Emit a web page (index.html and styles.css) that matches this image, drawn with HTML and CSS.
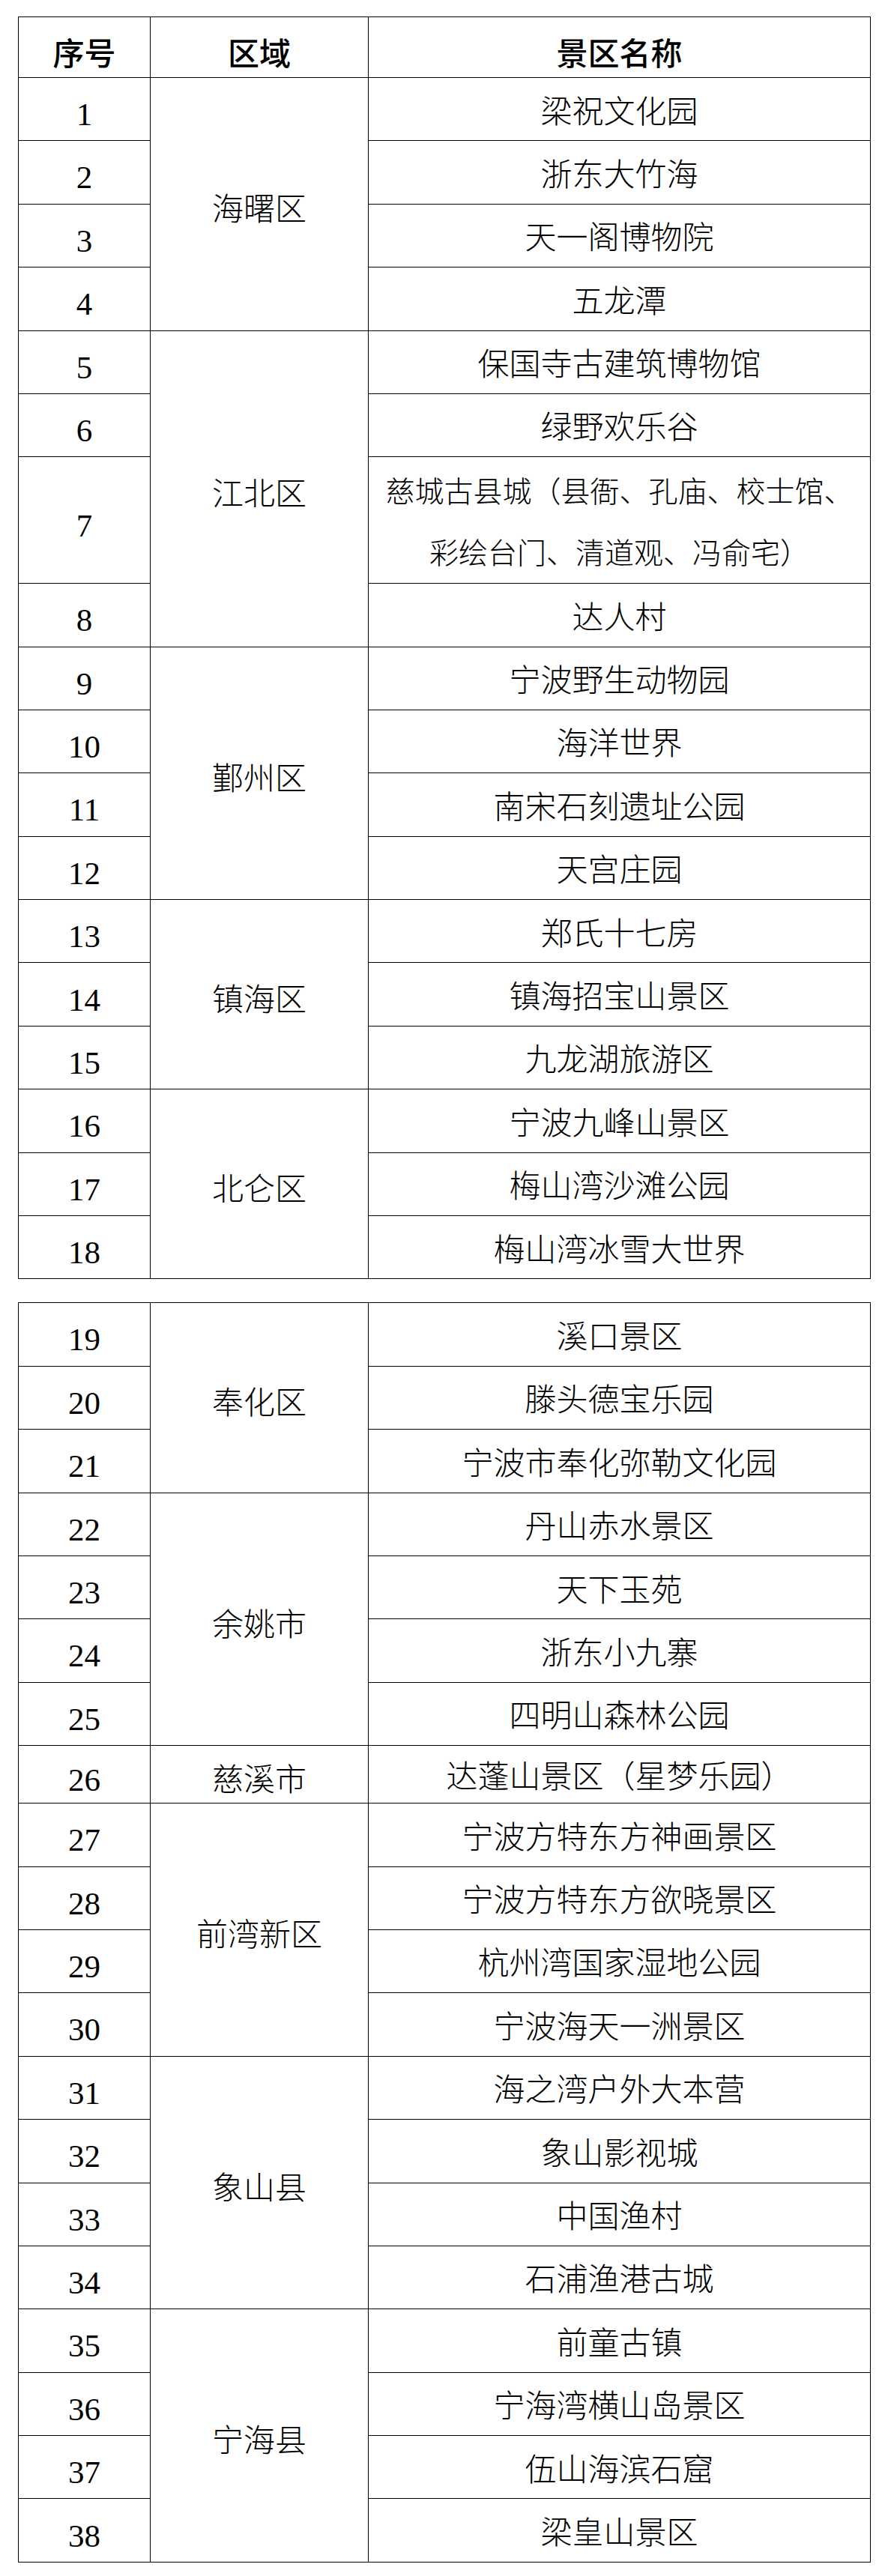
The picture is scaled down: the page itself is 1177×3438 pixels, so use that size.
FILE: index.html
```html
<!DOCTYPE html>
<html lang="zh-CN">
<head>
<meta charset="utf-8">
<title>景区名单</title>
<link rel="stylesheet" href="styles.css">
</head>
<body>
<table class="tbl first">
  <colgroup><col class="c1"><col class="c2"><col class="c3"></colgroup>
  <tr class="head"><th>序号</th><th>区域</th><th>景区名称</th></tr>
  <tr><td class="num">1</td><td class="reg" rowspan="4">海曙区</td><td class="name">梁祝文化园</td></tr>
  <tr><td class="num">2</td><td class="name">浙东大竹海</td></tr>
  <tr><td class="num">3</td><td class="name">天一阁博物院</td></tr>
  <tr><td class="num">4</td><td class="name">五龙潭</td></tr>
  <tr><td class="num">5</td><td class="reg" rowspan="4">江北区</td><td class="name">保国寺古建筑博物馆</td></tr>
  <tr><td class="num">6</td><td class="name">绿野欢乐谷</td></tr>
  <tr class="tall"><td class="num">7</td><td class="name two">慈城古县城（县衙、孔庙、校士馆、<br>彩绘台门、清道观、冯俞宅）</td></tr>
  <tr><td class="num">8</td><td class="name">达人村</td></tr>
  <tr><td class="num">9</td><td class="reg" rowspan="4">鄞州区</td><td class="name">宁波野生动物园</td></tr>
  <tr><td class="num">10</td><td class="name">海洋世界</td></tr>
  <tr><td class="num">11</td><td class="name">南宋石刻遗址公园</td></tr>
  <tr><td class="num">12</td><td class="name">天宫庄园</td></tr>
  <tr><td class="num">13</td><td class="reg" rowspan="3">镇海区</td><td class="name">郑氏十七房</td></tr>
  <tr><td class="num">14</td><td class="name">镇海招宝山景区</td></tr>
  <tr><td class="num">15</td><td class="name">九龙湖旅游区</td></tr>
  <tr><td class="num">16</td><td class="reg" rowspan="3">北仑区</td><td class="name">宁波九峰山景区</td></tr>
  <tr><td class="num">17</td><td class="name">梅山湾沙滩公园</td></tr>
  <tr><td class="num">18</td><td class="name">梅山湾冰雪大世界</td></tr>
</table>

<table class="tbl second">
  <colgroup><col class="c1"><col class="c2"><col class="c3"></colgroup>
  <tr><td class="num">19</td><td class="reg" rowspan="3">奉化区</td><td class="name">溪口景区</td></tr>
  <tr><td class="num">20</td><td class="name">滕头德宝乐园</td></tr>
  <tr><td class="num">21</td><td class="name">宁波市奉化弥勒文化园</td></tr>
  <tr><td class="num">22</td><td class="reg" rowspan="4">余姚市</td><td class="name">丹山赤水景区</td></tr>
  <tr><td class="num">23</td><td class="name">天下玉苑</td></tr>
  <tr><td class="num">24</td><td class="name">浙东小九寨</td></tr>
  <tr><td class="num">25</td><td class="name">四明山森林公园</td></tr>
  <tr class="short"><td class="num">26</td><td class="reg">慈溪市</td><td class="name">达蓬山景区（星梦乐园）</td></tr>
  <tr><td class="num">27</td><td class="reg" rowspan="4">前湾新区</td><td class="name">宁波方特东方神画景区</td></tr>
  <tr><td class="num">28</td><td class="name">宁波方特东方欲晓景区</td></tr>
  <tr><td class="num">29</td><td class="name">杭州湾国家湿地公园</td></tr>
  <tr><td class="num">30</td><td class="name">宁波海天一洲景区</td></tr>
  <tr><td class="num">31</td><td class="reg" rowspan="4">象山县</td><td class="name">海之湾户外大本营</td></tr>
  <tr><td class="num">32</td><td class="name">象山影视城</td></tr>
  <tr><td class="num">33</td><td class="name">中国渔村</td></tr>
  <tr><td class="num">34</td><td class="name">石浦渔港古城</td></tr>
  <tr><td class="num">35</td><td class="reg" rowspan="4">宁海县</td><td class="name">前童古镇</td></tr>
  <tr><td class="num">36</td><td class="name">宁海湾横山岛景区</td></tr>
  <tr><td class="num">37</td><td class="name">伍山海滨石窟</td></tr>
  <tr><td class="num">38</td><td class="name">梁皇山景区</td></tr>
</table>
</body>
</html>
```
FILE: styles.css
```css
html, body {
  margin: 0;
  padding: 0;
  background: #ffffff;
}

body {
  padding: 22px 0 17px 24px;
  color: #000000;
  font-family: "Noto Sans CJK SC", sans-serif;
}

.tbl {
  border-collapse: collapse;
  table-layout: fixed;
  width: 1137px;
}

.second {
  margin-top: 31px;
}

.c1 { width: 176px; }
.c2 { width: 291px; }
.c3 { width: 670px; }

.tbl th,
.tbl td {
  border: 1px solid #000000;
  padding: 0;
  text-align: center;
  vertical-align: middle;
  white-space: nowrap;
}

.tbl tr {
  height: 84.4px;
}

.tbl tr.head {
  height: 81px;
}

.tbl tr.tall {
  height: 168.8px;
}

.tbl tr.short {
  height: 77px;
}

.tbl th {
  font-family: "Noto Sans CJK SC", sans-serif;
  font-weight: 500;
  font-size: 42px;
  line-height: 1.2;
  padding-top: 12px;
}

.num {
  font-family: "Liberation Serif", "Times New Roman", serif;
  font-size: 43px;
  line-height: 1.1;
  padding-top: 14px !important;
}

.reg {
  font-family: "Noto Sans CJK SC", sans-serif;
  font-weight: 300;
  font-size: 42px;
  line-height: 1.2;
  padding-top: 8px !important;
}

.name {
  font-family: "Noto Sans CJK SC", sans-serif;
  font-weight: 300;
  font-size: 42px;
  line-height: 1.2;
}

.name.two {
  font-size: 39px;
  line-height: 82px;
}
```
